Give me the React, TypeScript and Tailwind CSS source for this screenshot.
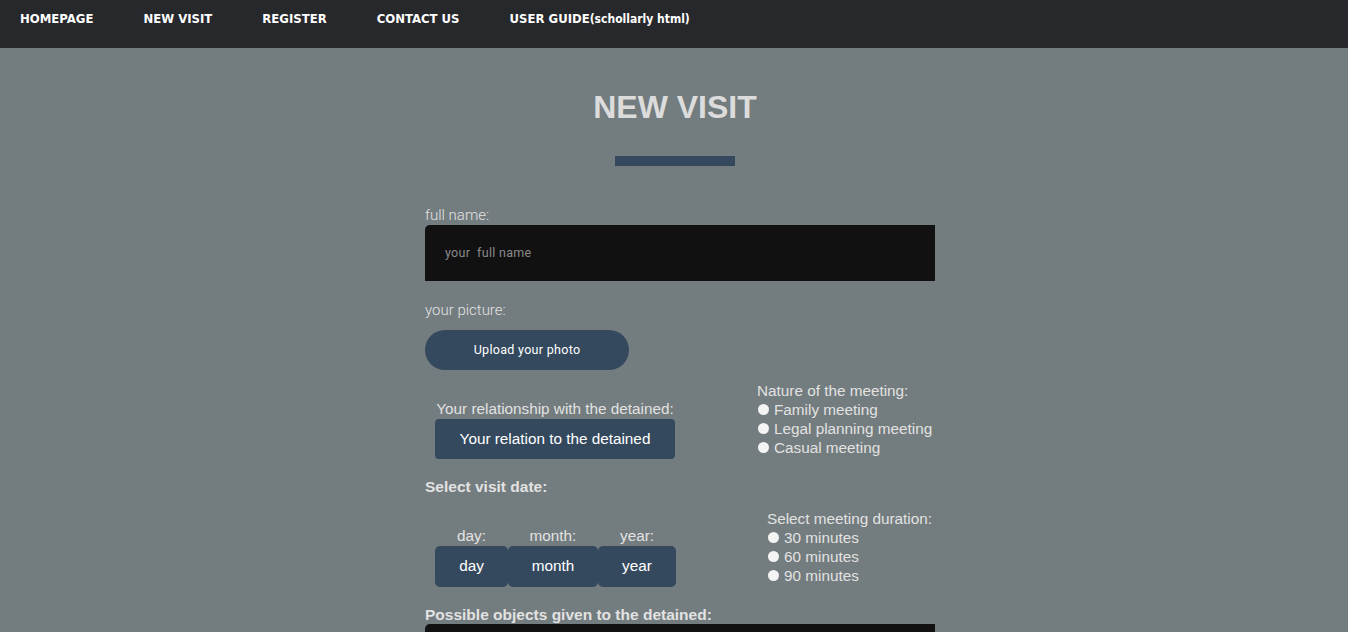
const navItems = ['HOMEPAGE', 'NEW VISIT', 'REGISTER', 'CONTACT US'];

function Radio({ label }: { label: string }) {
  return (
    <label className="flex items-center h-[19px] gap-[5px] whitespace-nowrap">
      <span className="w-[11px] h-[11px] rounded-full bg-[#f4f4f4] shrink-0 ml-[1px]" />
      <span>{label}</span>
    </label>
  );
}

function RadioGroup({ title, options }: { title: string; options: string[] }) {
  return (
    <div className="flex flex-col text-[15.3px] leading-[19px] text-[#e2e2e2] font-['Liberation_Sans',Arial,sans-serif] whitespace-nowrap">
      <span>{title}</span>
      {options.map((o) => (
        <Radio key={o} label={o} />
      ))}
    </div>
  );
}

export default function App() {
  return (
    <div className="min-h-[632px] bg-[#737c7e] font-['Liberation_Sans',Arial,sans-serif]">
      <nav className="h-[48px] bg-[#27282c] flex items-start pt-[9px] pl-[20px] gap-[50px] text-white font-bold text-[13px] font-['Liberation_Sans_Narrow','DejaVu_Sans_Condensed',sans-serif]">
        {navItems.map((n) => (
          <span key={n}>{n}</span>
        ))}
        <span>
          USER GUIDE<span className="text-[12px]">(schollarly html)</span>
        </span>
      </nav>

      <div className="flex flex-col items-center">
        <h1 className="mt-[40px] ml-[2px] text-[32px] leading-[38px] font-bold text-[#dcdcdc]">NEW VISIT</h1>
        <div className="mt-[30px] ml-[2px] w-[120px] h-[10px] bg-[#34495e]" />
      </div>

      <form className="ml-[425px] w-[510px] mt-[40px] text-[#e2e2e2]">
        <label className="block text-[15px] leading-[18px] font-light font-['Roboto',sans-serif]">full name:</label>
        <div className="mt-[1px] h-[56px] bg-[#111112] rounded-tl-[5px] flex items-center pl-[20px] text-[12.5px] text-[#8a8a8a] font-['Roboto',sans-serif] tracking-[0.3px]">
          your&nbsp; full name
        </div>

        <label className="block mt-[20px] text-[15px] leading-[18px] font-light font-['Roboto',sans-serif]">your picture:</label>
        <button type="button" className="mt-[11px] w-[204px] h-[40px] rounded-full bg-[#34495e] text-white text-[12.5px] font-['Roboto',sans-serif] tracking-[0.3px]">
          Upload your photo
        </button>

        <div className="mt-[11px] flex items-end">
          <div className="ml-[10px] flex flex-col items-center w-[240px]">
            <span className="text-[15.3px] leading-[19px] whitespace-nowrap">Your relationship with the detained:</span>
            <div className="mt-[1px] w-[240px] h-[40px] rounded-[4px] bg-[#34495e] flex items-center justify-center text-[15.3px] text-white whitespace-nowrap">
              Your relation to the detained
            </div>
          </div>
          <div className="ml-[82px] mb-[2px]">
            <RadioGroup title="Nature of the meeting:" options={['Family meeting', 'Legal planning meeting', 'Casual meeting']} />
          </div>
        </div>

        <div className="mt-[18px] text-[15.5px] leading-[19px] font-bold">Select visit date:</div>

        <div className="mt-[13px] flex items-end">
          <div className="ml-[10px] flex">
            {[
              ['day:', 'day', 'w-[73px]'],
              ['month:', 'month', 'w-[90px]'],
              ['year:', 'year', 'w-[78px]'],
            ].map(([l, v, w]) => (
              <div key={v} className={`flex flex-col items-center ${w}`}>
                <span className="text-[15.3px] leading-[19px]">{l}</span>
                <div className="mt-[1px] w-full h-[41px] rounded-[5px] bg-[#34495e] flex items-center justify-center text-[15.3px] text-white">
                  {v}
                </div>
              </div>
            ))}
          </div>
          <div className="ml-[91px] mb-[2px]">
            <RadioGroup title="Select meeting duration:" options={['30 minutes', '60 minutes', '90 minutes']} />
          </div>
        </div>

        <div className="mt-[18px] text-[15.5px] leading-[19px] font-bold whitespace-nowrap">Possible objects given to the detained:</div>
        <div className="h-[56px] bg-[#111112] rounded-tl-[5px]" />
      </form>
    </div>
  );
}
